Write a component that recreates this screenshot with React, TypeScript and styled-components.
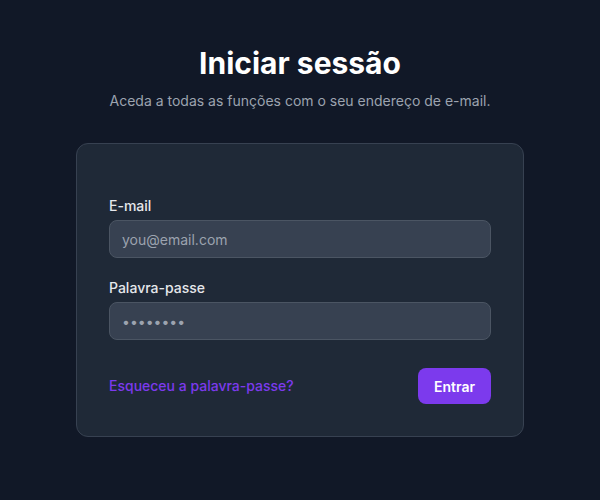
import * as React from "react";
import styled, { createGlobalStyle } from "styled-components";

const GlobalStyle = createGlobalStyle`
  html, body {
    margin: 0;
    padding: 0;
    background: #111827;
  }
  body {
    font-family: Inter, "Noto Sans", sans-serif;
    -webkit-font-smoothing: antialiased;
  }
  * {
    box-sizing: border-box;
  }
`;

export default function App() {
  return (
    <React.Fragment>
      <GlobalStyle />
      <Page>
        <Title>Iniciar sessão</Title>
        <Subtitle>Aceda a todas as funções com o seu endereço de e-mail.</Subtitle>
        <Card>
          <Field>
            <Label htmlFor="email">E-mail</Label>
            <Input id="email" type="email" placeholder="you@email.com" />
          </Field>
          <Field>
            <Label htmlFor="password">Palavra-passe</Label>
            <Input id="password" type="password" defaultValue="password" />
          </Field>
          <Actions>
            <ForgotLink href="#">Esqueceu a palavra-passe?</ForgotLink>
            <SubmitButton type="button">Entrar</SubmitButton>
          </Actions>
        </Card>
      </Page>
    </React.Fragment>
  );
}

const Page = styled.div`
  min-height: 500px;
  display: flex;
  flex-direction: column;
  align-items: center;
  padding-top: 45px;
`;

const Title = styled.h1`
  margin: 0;
  color: #ffffff;
  font-size: 30px;
  line-height: 36px;
  font-weight: 700;
`;

const Subtitle = styled.p`
  margin: 10px 0 0;
  color: #9ca3af;
  font-size: 14px;
  line-height: 20px;
`;

const Card = styled.form`
  width: 448px;
  margin-top: 32px;
  padding: 52px 32px 32px;
  background: #1f2937;
  border: 1px solid #374151;
  border-radius: 12px;
  display: flex;
  flex-direction: column;
  gap: 20px;
`;

const Field = styled.div`
  display: flex;
  flex-direction: column;
  gap: 4px;
`;

const Label = styled.label`
  color: #e5e7eb;
  font-size: 14px;
  line-height: 20px;
  font-weight: 500;
`;

const Input = styled.input`
  height: 38px;
  width: 100%;
  padding: 0 12px;
  background: #374151;
  border: 1px solid #4b5563;
  border-radius: 8px;
  color: #9ca3af;
  font-family: Inter, "Noto Sans", sans-serif;
  font-size: 14px;
  outline: none;

  &::placeholder {
    color: #9ca3af;
  }
`;

const Actions = styled.div`
  margin-top: 8px;
  display: flex;
  align-items: center;
  justify-content: space-between;
`;

const ForgotLink = styled.a`
  color: #7c3aed;
  font-size: 14px;
  line-height: 20px;
  font-weight: 500;
  text-decoration: none;
`;

const SubmitButton = styled.button`
  height: 36px;
  padding: 0 16px;
  background: #7c3aed;
  color: #ffffff;
  border: none;
  border-radius: 8px;
  font-family: Inter, "Noto Sans", sans-serif;
  font-size: 14px;
  font-weight: 600;
  cursor: pointer;
`;
